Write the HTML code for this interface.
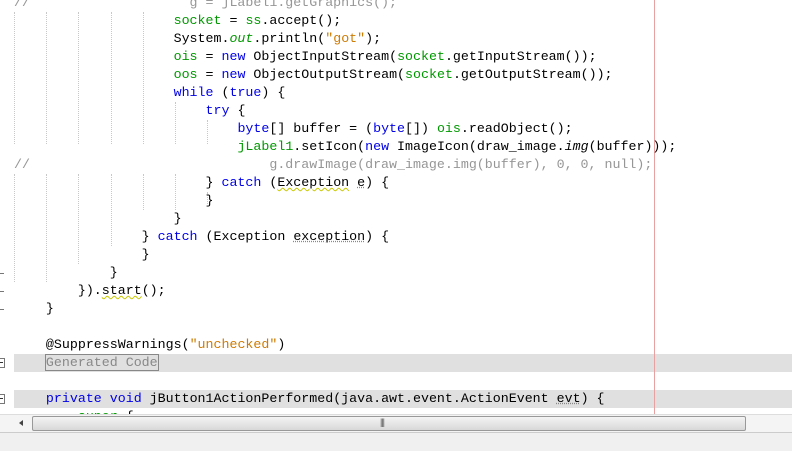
<!DOCTYPE html>
<html><head><style>
body{margin:0;width:792px;height:450px;overflow:hidden;background:#fff;position:relative;font-family:"Liberation Mono",monospace;font-size:13.3px}
.l{position:absolute;left:14px;height:18px;line-height:18px;white-space:pre;color:#000}
.k{color:#0000e6}.f{color:#009900}.s{color:#ce7b00}.c{color:#969696}.i{font-style:italic}
.g{position:absolute;width:0;border-left:1px dotted #c8c8c8}
.hl{position:absolute;left:14px;width:778px;height:18px;background:#e0e0e0}
.u{text-decoration:underline wavy #c8c800;text-decoration-thickness:1px}
.ug{text-decoration:underline dotted #888}
</style></head><body>
<div class="hl" style="top:354px"></div>
<div class="hl" style="top:390px"></div>
<div style="position:absolute;left:654px;top:0;width:1px;height:414px;background:#e8a0a0"></div>
<!-- indent guides -->
<div class="g" style="left:14px;top:12px;height:132px"></div>
<div class="g" style="left:14px;top:174px;height:108px"></div>
<div class="g" style="left:46px;top:12px;height:132px"></div>
<div class="g" style="left:46px;top:174px;height:108px"></div>
<div class="g" style="left:78px;top:12px;height:132px"></div>
<div class="g" style="left:78px;top:174px;height:90px"></div>
<div class="g" style="left:111px;top:12px;height:132px"></div>
<div class="g" style="left:111px;top:174px;height:72px"></div>
<div class="g" style="left:143px;top:12px;height:132px"></div>
<div class="g" style="left:143px;top:174px;height:36px"></div>
<div class="g" style="left:175px;top:102px;height:42px"></div>
<div class="g" style="left:175px;top:174px;height:36px"></div>
<div class="g" style="left:207px;top:120px;height:24px"></div>
<div class="g" style="left:207px;top:192px;height:12px"></div>
<div class="l c" style="top:-6px">//                    g = jLabel1.getGraphics();</div>
<div class="l" style="top:12px">                    <span class="f">socket</span> = <span class="f">ss</span>.accept();</div>
<div class="l" style="top:30px">                    System.<span class="f i">out</span>.println(<span class="s">"got"</span>);</div>
<div class="l" style="top:48px">                    <span class="f">ois</span> = <span class="k">new</span> ObjectInputStream(<span class="f">socket</span>.getInputStream());</div>
<div class="l" style="top:66px">                    <span class="f">oos</span> = <span class="k">new</span> ObjectOutputStream(<span class="f">socket</span>.getOutputStream());</div>
<div class="l" style="top:84px">                    <span class="k">while</span> (<span class="k">true</span>) {</div>
<div class="l" style="top:102px">                        <span class="k">try</span> {</div>
<div class="l" style="top:120px">                            <span class="k">byte</span>[] buffer = (<span class="k">byte</span>[]) <span class="f">ois</span>.readObject();</div>
<div class="l" style="top:138px">                            <span class="f">jLabel1</span>.setIcon(<span class="k">new</span> ImageIcon(draw_image.<span class="i">img</span>(buffer)));</div>
<div class="l c" style="top:156px">//                              g.drawImage(draw_image.img(buffer), 0, 0, null);</div>
<div class="l" style="top:174px">                        } <span class="k">catch</span> (<span class="u">Exception</span> <span class="ug">e</span>) {</div>
<div class="l" style="top:192px">                        }</div>
<div class="l" style="top:210px">                    }</div>
<div class="l" style="top:228px">                } <span class="k">catch</span> (Exception <span class="ug">exception</span>) {</div>
<div class="l" style="top:246px">                }</div>
<div class="l" style="top:264px">            }</div>
<div class="l" style="top:282px">        }).<span class="u">start</span>();</div>
<div class="l" style="top:300px">    }</div>
<div class="l" style="top:336px">    @SuppressWarnings(<span class="s">"unchecked"</span>)</div>
<div class="l" style="top:354px">    <span style="color:#888;outline:1px solid #888;outline-offset:0">Generated Code</span></div>
<div class="l" style="top:390px">    <span class="k">private</span> <span class="k">void</span> jButton1ActionPerformed(java.awt.event.ActionEvent <span class="ug">evt</span>) {</div>
<div class="l" style="top:408px;height:6px;overflow:hidden">        <span class="f">super</span>.{</div>
<!-- gutter marks -->
<div style="position:absolute;left:0;top:273px;width:4px;height:1px;background:#777"></div>
<div style="position:absolute;left:0;top:291px;width:4px;height:1px;background:#777"></div>
<div style="position:absolute;left:0;top:309px;width:4px;height:1px;background:#777"></div>
<div style="position:absolute;left:-5px;top:358px;width:8px;height:8px;border:1px solid #777;background:#fff"></div>
<div style="position:absolute;left:-5px;top:394px;width:8px;height:8px;border:1px solid #777;background:#fff"></div>
<div style="position:absolute;left:0;top:362px;width:3px;height:1px;background:#333"></div>
<div style="position:absolute;left:0;top:398px;width:3px;height:1px;background:#333"></div>
<!-- scrollbar -->
<div style="position:absolute;left:0;top:414px;width:792px;height:18px;background:#f4f4f4;border-top:1px solid #ddd"></div>
<div style="position:absolute;left:19px;top:420px;width:0;height:0;border-top:3px solid transparent;border-bottom:3px solid transparent;border-right:4px solid #444"></div>
<div style="position:absolute;left:32px;top:416px;width:712px;height:13px;border:1px solid #999;border-radius:2px;background:linear-gradient(#f4f4f4,#d8d8d8)"></div>
<div style="position:absolute;left:380px;top:417px;font:9px 'Liberation Sans',sans-serif;color:#555;letter-spacing:-1px">|||</div>
<div style="position:absolute;left:0;top:432px;width:792px;height:18px;background:#f0f0f0;border-top:1px solid #ccc"></div>
</body></html>
